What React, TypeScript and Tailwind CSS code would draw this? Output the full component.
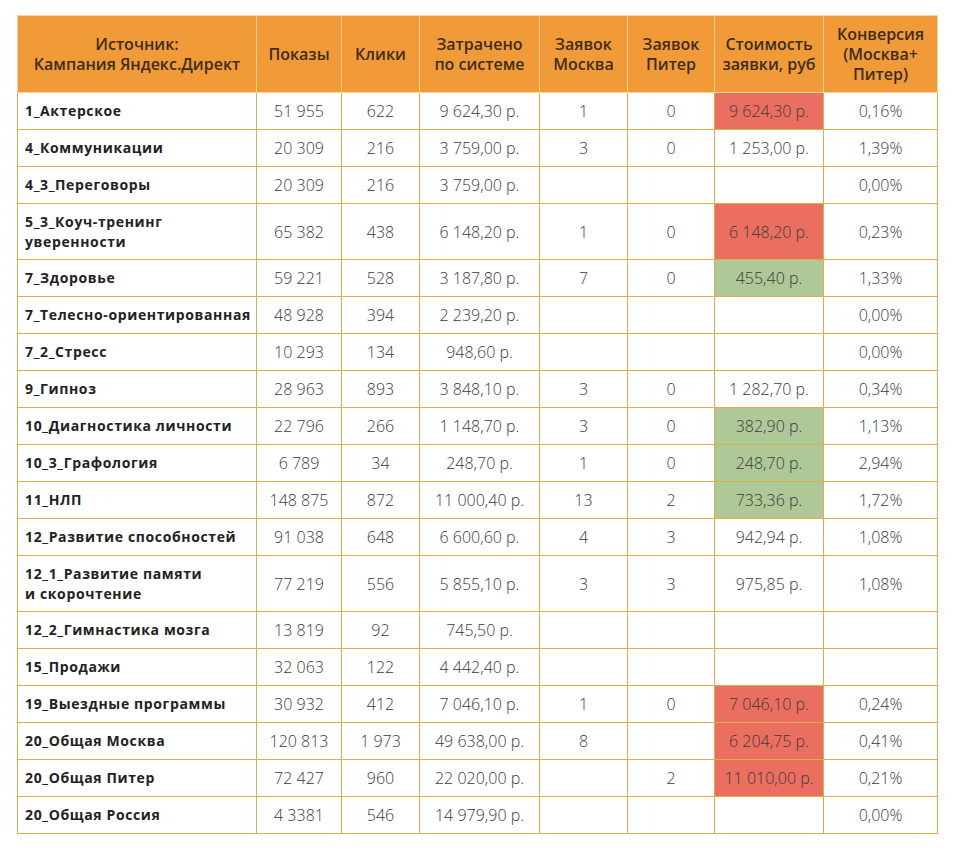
import React from 'react';

interface Row {
    name: string;
    shows: string;
    clicks: string;
    spent: string;
    msk: string;
    spb: string;
    cost: string;
    conv: string;
    mark?: 'red' | 'green';
    tall?: boolean;
}

const rows: Row[] = [
    { name: '1_Актерское', shows: '51 955', clicks: '622', spent: '9 624,30 р.', msk: '1', spb: '0', cost: '9 624,30 р.', conv: '0,16%', mark: 'red' },
    { name: '4_Коммуникации', shows: '20 309', clicks: '216', spent: '3 759,00 р.', msk: '3', spb: '0', cost: '1 253,00 р.', conv: '1,39%' },
    { name: '4_3_Переговоры', shows: '20 309', clicks: '216', spent: '3 759,00 р.', msk: '', spb: '', cost: '', conv: '0,00%' },
    { name: '5_3_Коуч-тренинг\nуверенности', shows: '65 382', clicks: '438', spent: '6 148,20 р.', msk: '1', spb: '0', cost: '6 148,20 р.', conv: '0,23%', mark: 'red', tall: true },
    { name: '7_Здоровье', shows: '59 221', clicks: '528', spent: '3 187,80 р.', msk: '7', spb: '0', cost: '455,40 р.', conv: '1,33%', mark: 'green' },
    { name: '7_Телесно-ориентированная', shows: '48 928', clicks: '394', spent: '2 239,20 р.', msk: '', spb: '', cost: '', conv: '0,00%' },
    { name: '7_2_Стресс', shows: '10 293', clicks: '134', spent: '948,60 р.', msk: '', spb: '', cost: '', conv: '0,00%' },
    { name: '9_Гипноз', shows: '28 963', clicks: '893', spent: '3 848,10 р.', msk: '3', spb: '0', cost: '1 282,70 р.', conv: '0,34%' },
    { name: '10_Диагностика личности', shows: '22 796', clicks: '266', spent: '1 148,70 р.', msk: '3', spb: '0', cost: '382,90 р.', conv: '1,13%', mark: 'green' },
    { name: '10_3_Графология', shows: '6 789', clicks: '34', spent: '248,70 р.', msk: '1', spb: '0', cost: '248,70 р.', conv: '2,94%', mark: 'green' },
    { name: '11_НЛП', shows: '148 875', clicks: '872', spent: '11 000,40 р.', msk: '13', spb: '2', cost: '733,36 р.', conv: '1,72%', mark: 'green' },
    { name: '12_Развитие способностей', shows: '91 038', clicks: '648', spent: '6 600,60 р.', msk: '4', spb: '3', cost: '942,94 р.', conv: '1,08%' },
    { name: '12_1_Развитие памяти\nи скорочтение', shows: '77 219', clicks: '556', spent: '5 855,10 р.', msk: '3', spb: '3', cost: '975,85 р.', conv: '1,08%', tall: true },
    { name: '12_2_Гимнастика мозга', shows: '13 819', clicks: '92', spent: '745,50 р.', msk: '', spb: '', cost: '', conv: '' },
    { name: '15_Продажи', shows: '32 063', clicks: '122', spent: '4 442,40 р.', msk: '', spb: '', cost: '', conv: '' },
    { name: '19_Выездные программы', shows: '30 932', clicks: '412', spent: '7 046,10 р.', msk: '1', spb: '0', cost: '7 046,10 р.', conv: '0,24%', mark: 'red' },
    { name: '20_Общая Москва', shows: '120 813', clicks: '1 973', spent: '49 638,00 р.', msk: '8', spb: '', cost: '6 204,75 р.', conv: '0,41%', mark: 'red' },
    { name: '20_Общая Питер', shows: '72 427', clicks: '960', spent: '22 020,00 р.', msk: '', spb: '2', cost: '11 010,00 р.', conv: '0,21%', mark: 'red' },
    { name: '20_Общая Россия', shows: '4 3381', clicks: '546', spent: '14 979,90 р.', msk: '', spb: '', cost: '', conv: '0,00%' },
];

const headers = [
    'Источник:\nКампания Яндекс.Директ',
    'Показы',
    'Клики',
    'Затрачено\nпо системе',
    'Заявок\nМосква',
    'Заявок\nПитер',
    'Стоимость\nзаявки, руб',
    'Конверсия\n(Москва+\nПитер)',
];

const widths = ['w-[239px]', 'w-[85px]', 'w-[78px]', 'w-[120px]', 'w-[88px]', 'w-[87px]', 'w-[109px]', 'w-[114px]'];

const cell = 'border border-[#e2ad45] text-center';

const App: React.FC = () => {
    return (
        <div className="min-h-screen bg-white pt-[15px] pl-[17px] font-['Open_Sans',sans-serif]">
            <table className="border-collapse table-fixed w-[921px]">
                <colgroup>
                    {widths.map((w, i) => (
                        <col key={i} className={w} />
                    ))}
                </colgroup>
                <thead>
                    <tr className="h-[77px] bg-[#f09b37]">
                        {headers.map((h, i) => (
                            <th
                                key={i}
                                className="border border-[#f7d39a] text-center font-semibold text-[16px] leading-[20px] text-[#3e2d1d] whitespace-pre-line px-0"
                            >
                                {h}
                            </th>
                        ))}
                    </tr>
                </thead>
                <tbody className="text-[16px] text-[#3a3a3a] font-light">
                    {rows.map((r, i) => (
                        <tr key={i} className={r.tall ? 'h-[56px]' : 'h-[37px]'}>
                            <td className="border border-[#e2ad45] text-left pl-[7px] pr-0 font-bold text-[14px] leading-[20px] tracking-[0.045em] text-[#222] whitespace-pre-line">
                                {r.name}
                            </td>
                            <td className={cell}>{r.shows}</td>
                            <td className={cell}>{r.clicks}</td>
                            <td className={cell}>{r.spent}</td>
                            <td className={cell}>{r.msk}</td>
                            <td className={cell}>{r.spb}</td>
                            <td
                                className={
                                    cell +
                                    (r.mark === 'red'
                                        ? ' bg-[#eb6f60]'
                                        : r.mark === 'green'
                                        ? ' bg-[#afc898]'
                                        : '')
                                }
                            >
                                {r.cost}
                            </td>
                            <td className={cell}>{r.conv}</td>
                        </tr>
                    ))}
                </tbody>
            </table>
        </div>
    );
};

export default App;
